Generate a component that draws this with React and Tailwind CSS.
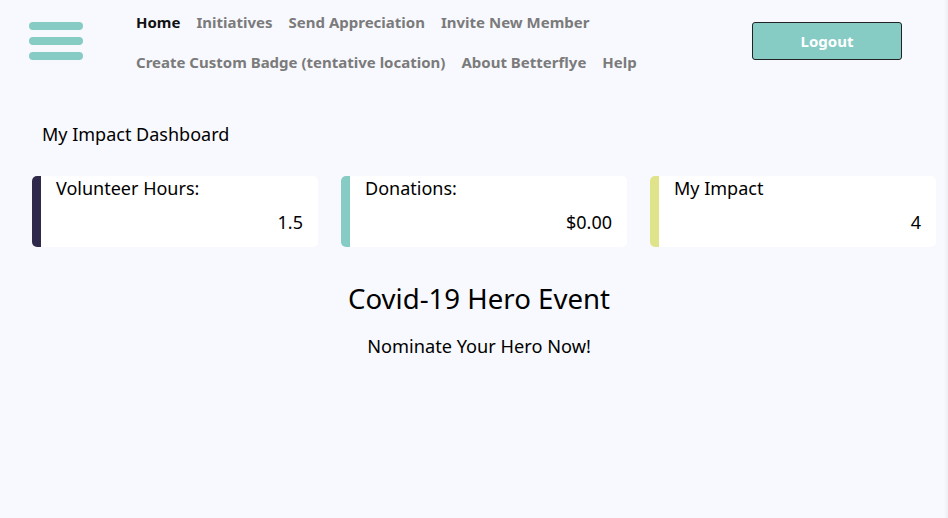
export default function App() {
  const cards = [
    { label: "Volunteer Hours:", value: "1.5", color: "bg-[#2f2a4c]" },
    { label: "Donations:", value: "$0.00", color: "bg-[#86cbc4]" },
    { label: "My Impact", value: "4", color: "bg-[#dfe38a]" },
  ];
  return (
    <div className="w-[948px] h-[518px] overflow-hidden bg-[#f8f9fe] relative font-['Noto_Sans',sans-serif]">
      <div className="absolute right-0 top-0 w-[4px] h-full bg-gradient-to-r from-[#f8f9fe] to-[#eceef3]" />
      <header className="flex items-start pt-[8px]">
        <div className="ml-[29px] mt-[14px] flex flex-col gap-[7px]">
          <div className="w-[54px] h-[8px] rounded-full bg-[#86cbc4]" />
          <div className="w-[54px] h-[8px] rounded-full bg-[#86cbc4]" />
          <div className="w-[54px] h-[8px] rounded-full bg-[#86cbc4]" />
        </div>
        <nav className="ml-[53px] w-[520px] flex flex-wrap gap-x-[16px] gap-y-[19px] text-[15px] font-bold text-[#7b7b7b] leading-[21px] pt-[4px]">
          <span className="text-[#111]">Home</span>
          <span>Initiatives</span>
          <span>Send Appreciation</span>
          <span>Invite New Member</span>
          <span>Create Custom Badge (tentative location)</span>
          <span>About Betterflye</span>
          <span>Help</span>
        </nav>
        <button className="ml-auto mr-[46px] mt-[14px] w-[150px] h-[38px] bg-[#86cbc4] border border-[#222] rounded-[3px] text-white font-bold text-[15px] pt-[1px]">
          Logout
        </button>
      </header>
      <div className="mt-[49px] pl-[42px] text-[18px] text-black leading-[24px]">My Impact Dashboard</div>
      <div className="mt-[30px] pl-[32px] pr-[12px] grid grid-cols-3 gap-[23px]">
        {cards.map((c) => (
          <div key={c.label} className="flex h-[71px] rounded-[5px] overflow-hidden bg-white">
            <div className={`w-[9px] ${c.color}`} />
            <div className="flex-1 flex flex-col pl-[15px] pr-[15px] text-[18px] leading-[24px] text-black">
              <div>{c.label}</div>
              <div className="text-right mt-[10px]">{c.value}</div>
            </div>
          </div>
        ))}
      </div>
      <div className="pl-[10px] text-center text-black">
        <div className="mt-[33px] text-[27.6px] leading-[36px]">Covid-19 Hero Event</div>
        <div className="mt-[18px] text-[18.2px] leading-[24px]">Nominate Your Hero Now!</div>
      </div>
    </div>
  );
}
